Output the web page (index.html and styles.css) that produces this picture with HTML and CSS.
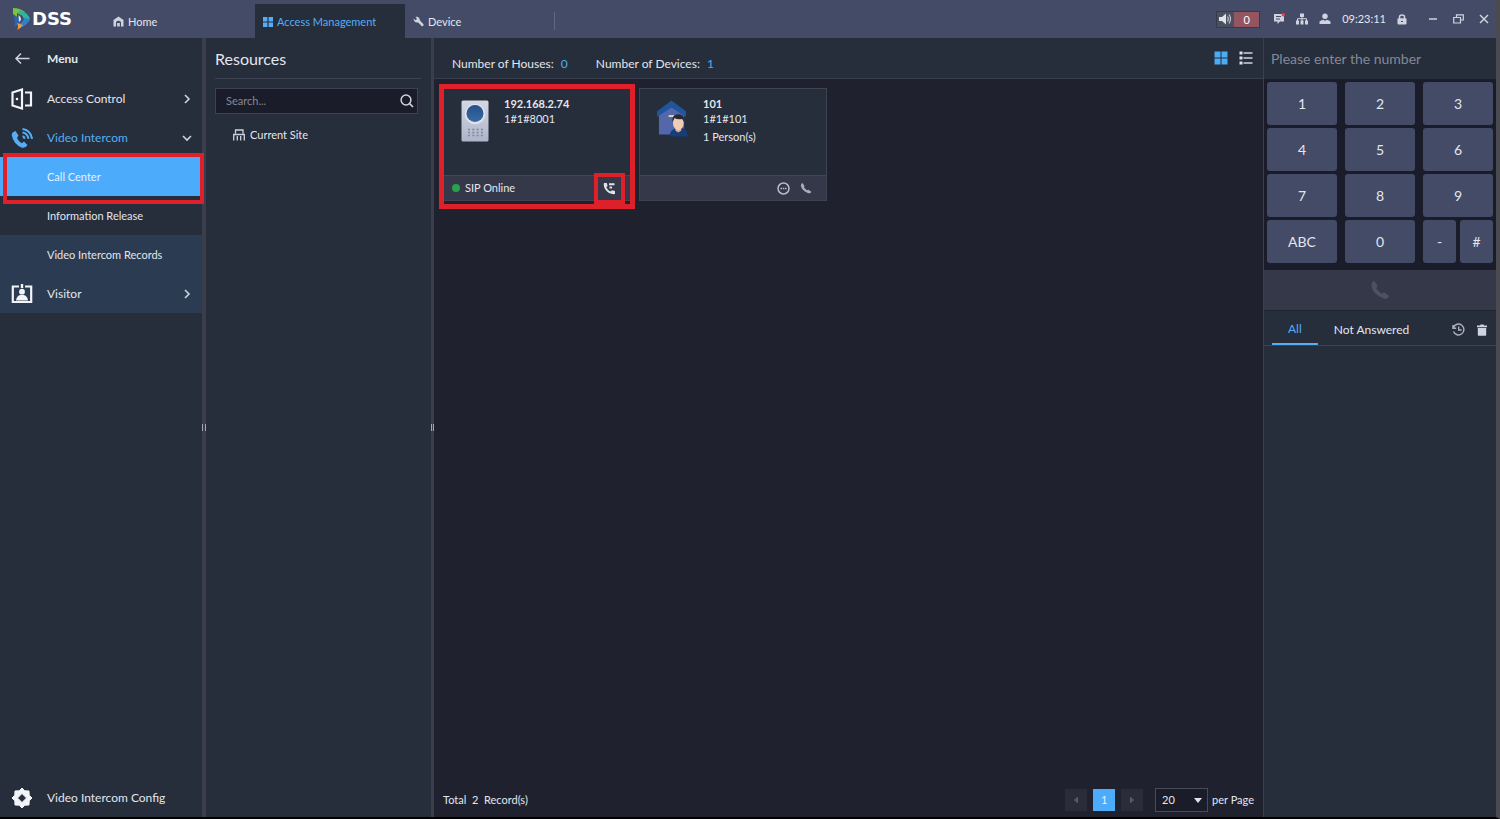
FILE: index.html
```
<!DOCTYPE html>
<html lang="en">
<head>
<meta charset="utf-8">
<title>DSS - Access Management</title>
<link rel="stylesheet" href="styles.css">
</head>
<body>
<div class="app">
  <header class="topbar">
    <div class="logo">
      <svg width="20" height="24" viewBox="0 0 20 24" aria-hidden="true">
        <path d="M1 1 Q8 1 13 5 L9 8 L5 6 L5 10 L1 7Z" fill="#7cc242"/>
        <path d="M8 3 Q17 6 18 13 L12 12 Q11 8 6 6Z" fill="#2fb59b"/>
        <path d="M18 12 Q16 18 8 21 L6 17 Q11 16 12 11Z" fill="#2f80d0"/>
        <path d="M1 8 L7 11 L7 17 L2 20 Q4 14 1 8Z" fill="#2b62b4"/>
        <path d="M5 16 L11 18 Q9 21 5 23 Q7 20 5 16Z" fill="#f09a35"/>
        <path d="M6.500 8 Q9 10 9 12 Q9 14 7 15Z" fill="#dfe8ee"/>
      </svg>
      <span class="logo-text">DSS</span>
    </div>
    <nav class="tabs">
      <a class="tab tab-home" href="#">
        <svg width="11" height="11" viewBox="0 0 11 11"><path d="M5.500 0.500 L10.500 4 V10.500 H8 V6 Q5.500 3.500 3 6 V10.500 H0.500 V4Z M4.200 7 H6.800 V10.500 H4.200Z" fill="#cfd3df"/></svg>
        Home</a>
      <a class="tab tab-active" href="#" aria-current="page">
        <svg width="10" height="10" viewBox="0 0 10 10"><path d="M0 0h4.400v4.400H0zM5.600 0H10v4.400H5.600zM0 5.600h4.400V10H0zM5.600 5.600H10V10H5.600z" fill="#55aef5"/></svg>
        Access Management</a>
      <a class="tab tab-device" href="#">
        <svg width="11" height="11" viewBox="0 0 11 11"><path d="M0.500 2.500 L2.500 4.200 L4 3 L2.500 0.800 Q6.500 0 7 4.500 L10.500 8.300 Q11 10.500 8.800 10.200 L5.300 6.500 Q1 7.300 0.500 2.500Z" fill="#cfd3df"/></svg>
        Device</a>
    </nav>
    <div class="tools">
      <div class="alarm">
        <button class="alarm-sound" aria-label="Alarm sound">
          <svg width="13" height="12" viewBox="0 0 13 12"><path d="M0 4h3l4-3.500v11L3 8H0z" fill="#e0e3ea"/><path d="M8.500 3.500q1.500 2.500 0 5M10 1.500q3 4.500 0 9" fill="none" stroke="#c3c7d2" stroke-width="1.200"/></svg>
        </button>
        <span class="alarm-count">0</span>
      </div>
      <button class="tool" aria-label="Messages">
        <svg width="12" height="12" viewBox="0 0 12 12"><path d="M1 1h10v7.500H7L4.500 11V8.500H1z" fill="#cfd3df"/><path d="M3 3.500h5M3 6h4" stroke="#444b66" stroke-width="1"/><circle cx="10.300" cy="1.700" r="1.700" fill="#e8404a"/></svg>
      </button>
      <button class="tool" aria-label="Network">
        <svg width="12" height="12" viewBox="0 0 12 12"><path d="M4 0.500h4v3.500H4zM0 7.500h3V11.500H0zM4.500 7.500h3V11.500h-3zM9 7.500h3V11.500H9z" fill="#cfd3df"/><path d="M6 3.500V8M1.500 8V5.700h9V8" fill="none" stroke="#cfd3df"/></svg>
      </button>
      <button class="tool" aria-label="User">
        <svg width="12" height="12" viewBox="0 0 12 12"><circle cx="6" cy="3.200" r="2.700" fill="#cfd3df"/><path d="M0.500 11V8.500Q2.500 7 4.500 6.800L6 8l1.500-1.200Q9.500 7 11.500 8.500V11z" fill="#cfd3df"/></svg>
      </button>
      <time class="clock">09:23:11</time>
      <button class="tool tool-lock" aria-label="Lock">
        <svg width="10" height="11" viewBox="0 0 10 11"><path d="M2.500 5V3Q2.500 1 5 1t2.500 2V5" fill="none" stroke="#cfd3df" stroke-width="1.500"/><rect x="0.500" y="4.200" width="9" height="6.300" rx="1" fill="#cfd3df"/><path d="M4 7.500h2" stroke="#444b66"/></svg>
      </button>
      <button class="tool tool-window" aria-label="Minimize">
        <svg width="10" height="10" viewBox="0 0 10 10"><path d="M1 5h8" stroke="#cfd3df" stroke-width="1.500"/></svg>
      </button>
      <button class="tool tool-window" aria-label="Restore">
        <svg width="11" height="10" viewBox="0 0 11 10"><path d="M0.700 3.500h6.800v5.500H0.700zM3.500 3.500V0.800h6.800v5.200H7.500" fill="none" stroke="#cfd3df" stroke-width="1.200"/></svg>
      </button>
      <button class="tool tool-window" aria-label="Close">
        <svg width="10" height="10" viewBox="0 0 10 10"><path d="M1 1l8 8M9 1L1 9" stroke="#cfd3df" stroke-width="1.500"/></svg>
      </button>
    </div>
  </header>

  <div class="workspace">
    <nav class="sidebar">
      <button class="menu-item menu-head">
        <svg class="menu-icon" width="22" height="22" viewBox="0 0 22 22"><path d="M18.500 10.500H5M10 5.500L5 10.500l5 5" fill="none" stroke="#cfd3df" stroke-width="1.500"/></svg>
        <span>Menu</span>
      </button>
      <button class="menu-item">
        <svg class="menu-icon" width="22" height="22" viewBox="0 0 22 22"><path d="M1.500 4.500L11 1.500v19L1.500 17.500zM14 4.500h6v13h-6" fill="none" stroke="#f2f4f8" stroke-width="2.200"/><circle cx="6" cy="11" r="1.300" fill="#f2f4f8"/></svg>
        <span>Access Control</span>
        <svg class="chevron" width="10" height="10" viewBox="0 0 10 10"><path d="M3 1l4 4-4 4" fill="none" stroke="#cfd3df" stroke-width="1.600"/></svg>
      </button>
      <button class="menu-item menu-open">
        <svg class="menu-icon" width="22" height="22" viewBox="0 0 22 22"><path d="M4.500 4L7.500 8.500 6 11Q7.500 14.500 10.800 16.200L13 14.500 16.500 18Q14.500 21.500 11 20.700 2.500 17.500 0.700 8 0.700 5 4.500 4Z" fill="#55aef5"/><path d="M11.500 9.200q1.800.4 2.200 2.600M11.500 5.500q5 .8 6 6.300M11.500 2q8 1 9.600 9.800" fill="none" stroke="#55aef5" stroke-width="2"/></svg>
        <span>Video Intercom</span>
        <svg class="chevron" width="10" height="10" viewBox="0 0 10 10"><path d="M1 3l4 4 4-4" fill="none" stroke="#cfd3df" stroke-width="1.600"/></svg>
      </button>
      <a class="submenu-item submenu-active" href="#" aria-current="page">Call Center</a>
      <a class="submenu-item" href="#">Information Release</a>
      <a class="submenu-item submenu-hover" href="#">Video Intercom Records</a>
      <button class="menu-item submenu-hover">
        <svg class="menu-icon" width="22" height="22" viewBox="0 0 22 22"><path d="M8 3.500H1.800v15.500h18.400V3.500H14" fill="none" stroke="#f2f4f8" stroke-width="2.200"/><path d="M9.800 1h2.400v4H9.800zM5 17.500Q5.500 13 9 12h4q3.500 1 4 5.500H5z" fill="#f2f4f8"/><circle cx="11" cy="8.700" r="2.900" fill="#f2f4f8"/></svg>
        <span>Visitor</span>
        <svg class="chevron" width="10" height="10" viewBox="0 0 10 10"><path d="M3 1l4 4-4 4" fill="none" stroke="#cfd3df" stroke-width="1.600"/></svg>
      </button>
      <button class="menu-item menu-config">
        <svg class="menu-icon" width="22" height="22" viewBox="0 0 22 22"><path fill-rule="evenodd" d="M11 1L13.800 3.800 18 4 18.200 8.200 21 11 18.200 13.800 18 18 13.800 18.200 11 21 8.200 18.200 4 18 3.800 13.800 1 11 3.800 8.200 4 4 8.200 3.800ZM11 6.500L6.500 11l4.500 4.500 4.500-4.500Z" fill="#f2f4f8" stroke="#f2f4f8" stroke-width="1"/></svg>
        <span>Video Intercom Config</span>
      </button>
    </nav>
    <div class="splitter"><span class="grip"></span></div>

    <section class="resources">
      <h2 class="resources-title">Resources</h2>
      <label class="search">
        <input type="text" placeholder="Search..." aria-label="Search resources">
        <svg width="14" height="14" viewBox="0 0 14 14"><circle cx="6" cy="6" r="4.900" fill="none" stroke="#cfd3df" stroke-width="1.500"/><path d="M9.500 9.500L13 13" stroke="#cfd3df" stroke-width="1.700"/></svg>
      </label>
      <a class="site" href="#">
        <svg width="12" height="12" viewBox="0 0 12 12"><path d="M2.500 4.500V1h7.500v3.500M0.700 11.500V5.500h10.600v6M4.300 7v4.500M7.700 7v4.500" fill="none" stroke="#cfd3df" stroke-width="1.300"/></svg>
        Current Site</a>
    </section>
    <div class="splitter splitter-thin"><span class="grip"></span></div>

    <main class="main">
      <div class="summary">
        <span class="count">Number of Houses: <b class="figure">0</b></span>
        <span class="count">Number of Devices: <b class="figure">1</b></span>
        <div class="views">
          <button aria-label="Card view"><svg width="14" height="14" viewBox="0 0 14 14"><path d="M0.500 0.500h6v6h-6zM7.500 0.500h6v6h-6zM0.500 7.500h6v6h-6zM7.500 7.500h6v6h-6z" fill="#4dabf5"/></svg></button>
          <button aria-label="List view"><svg width="14" height="14" viewBox="0 0 14 14"><path d="M4.500 2h9M4.500 7h9M4.500 12h9" stroke="#cfd3df" stroke-width="1.300"/><path d="M0.500 0.500h3v3h-3zM0.500 5.500h3v3h-3zM0.500 10.500h3v3h-3z" fill="#dfe2ea"/></svg></button>
        </div>
      </div>
      <div class="cards">
        <article class="card card-marked">
          <div class="card-body">
            <svg width="28" height="42" viewBox="0 0 28 42"><defs><linearGradient id="panel" x1="0" y1="0" x2="0" y2="1"><stop offset="0" stop-color="#d3d8e2"/><stop offset="1" stop-color="#adb5c9"/></linearGradient><linearGradient id="lens" x1="0" y1="0" x2="0" y2="1"><stop offset="0" stop-color="#24508a"/><stop offset="1" stop-color="#3a6aa5"/></linearGradient></defs><rect x="0.500" y="0.500" width="27" height="41" rx="1.500" fill="url(#panel)"/><circle cx="14" cy="14" r="10.300" fill="#dde3ed"/><circle cx="14" cy="13.500" r="8.500" fill="url(#lens)"/><path d="M7 29.500h15M7 32.500h15M7 35.500h15" stroke="#7d88a5" stroke-width="1.500" stroke-dasharray="2 2.300"/></svg>
            <div class="card-text">
              <h3>192.168.2.74</h3>
              <p>1#1#8001</p>
            </div>
          </div>
          <div class="card-foot">
            <span class="status">SIP Online</span>
            <button class="call-marked" aria-label="Call"><svg width="13" height="13" viewBox="0 0 13 13"><path d="M1 1H3.800L4.600 4 3.300 5.300Q4.500 8 7.500 9.500L9 8.200 12 9V12Q9 12.500 6 11 1 8 0.700 2.500Z" fill="#dfe2ea"/><path d="M6 2.200h5.500M6.500 5.400h2.500" stroke="#dfe2ea" stroke-width="2"/></svg></button>
          </div>
        </article>
        <article class="card">
          <div class="card-body">
            <svg width="31" height="38" viewBox="0 0 32 38"><path d="M2 11L15 5l13 6v24H2z" fill="#5367ab"/><path d="M15 0L30 11v6L15 7 0 17v-6z" fill="#1e559d"/><path d="M12 15h6v2h-6z" fill="#ead5a4"/><path d="M13 37q0-8 9-9t10 9z" fill="#123f7c"/><path d="M19 26h6v5l-3 2-3-2z" fill="#e0a78b"/><ellipse cx="22" cy="23" rx="5.500" ry="7.500" fill="#f1cdb7"/><path d="M16 22q-1-8 6-8t6 8l-2-3q-5 1-8-1z" fill="#262937"/></svg>
            <div class="card-text">
              <h3>101</h3>
              <p>1#1#101</p>
              <p class="persons">1 Person(s)</p>
            </div>
          </div>
          <div class="card-foot">
            <button class="card-action" aria-label="More"><svg width="13" height="13" viewBox="0 0 13 13"><circle cx="6.500" cy="6.500" r="5.500" fill="none" stroke="#b9bdca" stroke-width="1.500"/><path d="M3.500 6.500h1.500M5.800 6.500h1.500M8 6.500h1.500" stroke="#b9bdca" stroke-width="1.500"/></svg></button>
            <button class="card-action" aria-label="Call"><svg width="12" height="12" viewBox="0 0 12 12"><path d="M2.500 1L4.500 4 4 5.500 6.800 8.300 8.300 7.800 11.300 9.700Q10.800 11.800 8.300 11.200 1.500 8.500 0.800 3.300 1.200 1.300 2.500 1Z" fill="#a8adbd"/></svg></button>
          </div>
        </article>
      </div>
      <footer class="pager">
        <span class="total">Total&nbsp; 2&nbsp; Record(s)</span>
        <button class="page" disabled aria-label="Previous page"><svg width="6" height="8" viewBox="0 0 6 8"><path d="M5 0.500v7L1 4z" fill="#555b6b"/></svg></button>
        <button class="page page-current">1</button>
        <button class="page" disabled aria-label="Next page"><svg width="6" height="8" viewBox="0 0 6 8"><path d="M1 0.500v7L5 4z" fill="#555b6b"/></svg></button>
        <div class="size">
          <select id="size"><option>20</option><option>50</option></select>
          <svg width="8" height="5" viewBox="0 0 8 5"><path d="M0 0h8L4 5z" fill="#dfe2ea"/></svg>
        </div>
        <label for="size">per Page</label>
      </footer>
    </main>

    <aside class="dialer">
      <input class="number" type="text" placeholder="Please enter the number" aria-label="Number">
      <div class="keys">
        <button>1</button><button>2</button><button>3</button>
        <button>4</button><button>5</button><button>6</button>
        <button>7</button><button>8</button><button>9</button>
        <button>ABC</button><button>0</button>
        <div class="half-keys"><button>-</button><button>#</button></div>
      </div>
      <button class="dial" aria-label="Call"><svg width="20" height="20" viewBox="0 0 12 12"><path d="M2.500 0.500L4.500 3.500 3.800 5.200 6.800 8.200 8.500 7.500 11.500 9.500Q10.800 11.800 8.300 11.200 1.500 8.500 0.800 3.300 1.200 1 2.500 0.500Z" fill="#4d5262"/></svg></button>
      <div class="log-tabs">
        <button class="log-tab log-active">All</button>
        <button class="log-tab">Not Answered</button>
        <button class="log-tool" aria-label="History"><svg width="13" height="13" viewBox="0 0 13 13"><path d="M1.500 4.500A5.400 5.400 0 1 1 1.500 8.500M1 2v3.200h3.200M6.700 3.500v3.500h3" fill="none" stroke="#aeb2c0" stroke-width="1.400"/></svg></button>
        <button class="log-tool" aria-label="Delete"><svg width="10" height="12" viewBox="0 0 10 12"><path d="M0 1.500h3L3.500 0.500h3L7 1.500h3v1.800H0zM0.800 4h8.400V11q0 .8-.8.8H1.600q-.8 0-.8-.8z" fill="#cfd3df"/></svg></button>
      </div>
    </aside>
  </div>
</div>
</body>
</html>
```
FILE: styles.css
```
* {
  box-sizing: border-box;
}

body {
  margin: 0;
  background: #000;
  color: #e3e6ed;
  font: 11px/16px Lato, "Open Sans", sans-serif;
}

button,
input,
select {
  border: 0;
  padding: 0;
  background: none;
  color: inherit;
  font: inherit;
}

a {
  color: inherit;
  text-decoration: none;
}

h2,
h3,
p {
  margin: 0;
}

svg {
  flex: none;
  display: block;
}

.app {
  display: flex;
  flex-direction: column;
  min-height: 100vh;
  border-right: 4px solid #4a4a50;
  border-bottom: 2px solid #000;
}

/* Top bar */
.topbar {
  display: flex;
  height: 38px;
  background: #444b66;
}

.logo {
  display: flex;
  align-items: center;
  width: 105px;
  padding-left: 12px;
}

.logo-text {
  color: #fff;
  font: bold 18px/24px "DejaVu Sans", sans-serif;
}

.tabs {
  display: flex;
  padding-top: 4px;
}

.tab {
  display: flex;
  align-items: center;
  gap: 4px;
  width: 150px;
  padding: 1px 8px 0;
}

.tab-active {
  background: #262d3b;
  color: #55aef5;
}

.tab-device {
  position: relative;
}

.tab-device::after {
  content: "";
  position: absolute;
  right: 0;
  top: 8px;
  height: 18px;
  border-right: 1px solid #606780;
}

.tools {
  display: flex;
  align-items: center;
  gap: 11px;
  margin-left: auto;
  padding-right: 7px;
}

.alarm {
  display: flex;
  height: 17px;
  margin-right: 2px;
  border: 1px solid #343a4c;
}

.alarm-sound {
  display: grid;
  place-items: center;
  width: 17px;
  background: #4a5060;
}

.alarm-count {
  width: 25px;
  background: #945560;
  color: #fff;
  line-height: 15px;
  text-align: center;
}

.tool-window {
  margin-left: 4px;
}

.tool-lock {
  margin-right: 6px;
}

/* Workspace */
.workspace {
  display: flex;
  flex: 1;
  background: #262d3b;
}

.sidebar {
  display: flex;
  flex-direction: column;
  flex: none;
  width: 202px;
}

.menu-item {
  display: flex;
  align-items: center;
  gap: 14px;
  height: 39px;
  padding: 0 10px 0 11px;
  font-size: 12px;
  text-align: left;
}

.menu-head {
  height: 41px;
  font-weight: bold;
}

.menu-open {
  color: #55aef5;
}

.chevron {
  margin-left: auto;
}

.submenu-item {
  height: 39px;
  padding-left: 47px;
  line-height: 39px;
}

.submenu-active {
  position: relative;
  background: #4dabfc;
  color: #e3f2ff;
}

.submenu-active::after {
  content: "";
  position: absolute;
  inset: -4px -2px -8px 3px;
  border: 4px solid #de202b;
}

.submenu-hover {
  background: #2b3b51;
}

.menu-config {
  margin-top: auto;
}

.splitter {
  display: grid;
  place-items: center;
  flex: none;
  width: 4px;
  background: #3a3d4b;
}

.splitter-thin {
  width: 3px;
}

.grip {
  width: 100%;
  height: 7px;
  border: solid #a3a6b0;
  border-width: 0 1px;
}

.resources {
  display: flex;
  flex-direction: column;
  flex: none;
  width: 225px;
  padding: 0 10px 0 9px;
}

.resources-title {
  height: 41px;
  border-bottom: 1px solid #3c4251;
  font-size: 16px;
  font-weight: normal;
  line-height: 42px;
}

.search {
  display: flex;
  align-items: center;
  height: 26px;
  margin: 9px 3px 0 0;
  padding: 0 3px 0 10px;
  border: 1px solid #3c4251;
  background: #1b1c29;
}

.search input {
  flex: 1;
  min-width: 0;
}

input::placeholder {
  color: #858995;
  opacity: 1;
}

.site {
  display: flex;
  align-items: center;
  gap: 5px;
  margin-top: 13px;
  padding-left: 18px;
}

/* Device list */
.main {
  display: flex;
  flex-direction: column;
  flex: 1;
  min-width: 0;
  background: #1f222e;
}

.summary {
  display: flex;
  gap: 28px;
  height: 41px;
  padding: 0 10px 0 18px;
  border-bottom: 1px solid #3a3f4e;
  background: #262d3b;
  font-size: 12px;
}

.count {
  padding-top: 18px;
}

.figure {
  margin-left: 4px;
  color: #55aef5;
  font-weight: normal;
}

.views {
  display: flex;
  align-items: center;
  gap: 11px;
  margin-left: auto;
}

.cards {
  display: flex;
  flex-wrap: wrap;
  gap: 8px;
  padding: 9px;
}

.card {
  position: relative;
  width: 188px;
  border: 1px solid #3f4452;
  background: #262d3b;
}

.card-marked::after {
  content: "";
  position: absolute;
  inset: -5px -5px -9px;
  border: 5px solid #de202b;
}

.card-body {
  display: flex;
  gap: 15px;
  height: 86px;
  padding: 11px 17px 0;
}

.card-text {
  margin-top: -4px;
  font-size: 11px;
  line-height: 15px;
}

.card-text h3 {
  font-size: 11px;
}

.card-text .persons {
  margin-top: 3px;
}

.card-foot {
  display: flex;
  align-items: center;
  justify-content: flex-end;
  gap: 10px;
  height: 25px;
  padding: 0 14px 0 8px;
  border-top: 1px solid #424756;
  background: #343848;
}

.status {
  display: flex;
  align-items: center;
  gap: 5px;
  margin-right: auto;
}

.status::before {
  content: "";
  width: 8px;
  height: 8px;
  border-radius: 50%;
  background: #27a14b;
}

.call-marked {
  position: relative;
}

.call-marked::after {
  content: "";
  position: absolute;
  inset: -9px;
  border: 4px solid #de202b;
}

/* Pagination */
.pager {
  display: flex;
  align-items: center;
  margin-top: auto;
  padding: 0 9px 5px;
}

.total {
  margin-right: auto;
}

.page {
  display: grid;
  place-items: center;
  width: 22px;
  height: 22px;
  margin-right: 6px;
  background: #2a2d39;
}

.page-current {
  background: #4dabfc;
  color: #e3f2ff;
}

.size {
  display: flex;
  align-items: center;
  width: 53px;
  height: 24px;
  margin: 0 4px 0 6px;
  padding: 0 5px 0 6px;
  border: 1px solid #474a57;
  background: #1b1c29;
}

.size select {
  flex: 1;
  appearance: none;
}

/* Dialer */
.dialer {
  display: flex;
  flex-direction: column;
  flex: none;
  width: 233px;
  border-left: 1px solid #3a3f4e;
}

.number {
  height: 41px;
  padding: 0 7px;
  font-size: 14px;
}

.keys {
  display: grid;
  grid-template-columns: repeat(3, 1fr);
  grid-auto-rows: 43px;
  gap: 3px 8px;
  padding: 3px 3px 7px;
  background: #1b1c2a;
  font-size: 14px;
}

.keys button {
  border-radius: 3px;
  background: #434b66;
}

.half-keys {
  display: grid;
  grid-template-columns: 1fr 1fr;
  gap: 4px;
}

.dial {
  display: grid;
  place-items: center;
  height: 41px;
  border-bottom: 1px solid #202431;
  background: #343848;
}

.log-tabs {
  display: flex;
  height: 35px;
  padding: 0 9px 0 8px;
  border-bottom: 1px solid #3c4251;
  font-size: 12px;
}

.log-tab {
  padding: 4px 16px 0;
}

.log-active {
  border-bottom: 2px solid #55aef5;
  color: #55aef5;
}

.log-tool {
  margin-left: 12px;
  padding-top: 3px;
}

.log-tab + .log-tool {
  margin-left: auto;
}
```
